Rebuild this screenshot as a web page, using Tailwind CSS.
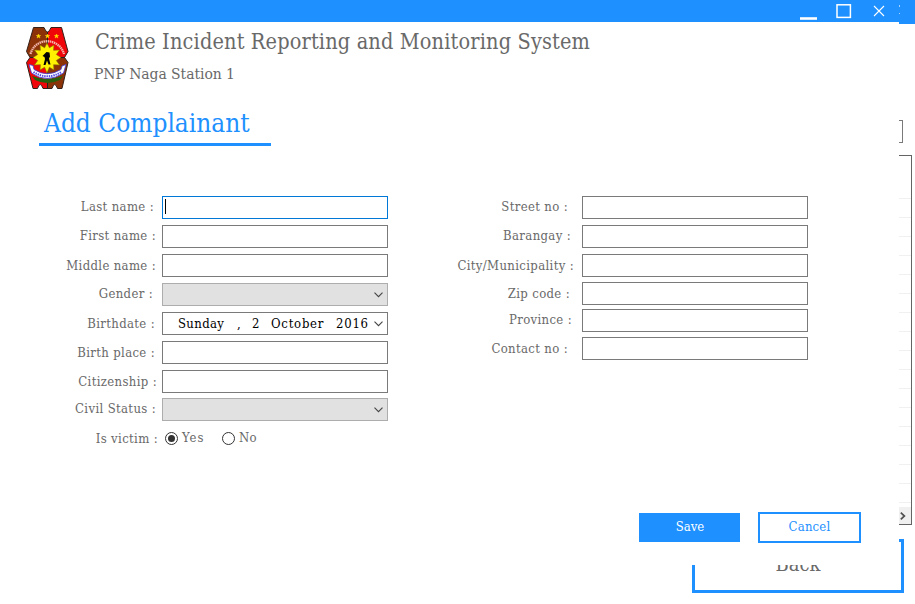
<!DOCTYPE html>
<html lang="en">
<head>
<meta charset="utf-8">
<title>Crime Incident Reporting and Monitoring System</title>
<script src="https://cdn.jsdelivr.net/npm/@tailwindcss/browser@4"></script>
</head>
<body class="relative h-[604px] w-[915px] overflow-hidden bg-white font-['DejaVu_Serif_Condensed','DejaVu_Serif',serif] text-[13px] text-[#696969]">

<!-- Main window, mostly hidden behind the dialog -->
<div class="flex h-[604px] flex-col items-end">
  <div class="flex h-6 w-full shrink-0 justify-end bg-[#1e90ff] pr-[15px] pt-[5px]">
    <div class="flex h-[9px] w-px flex-col justify-between"><i class="h-0.5 bg-white/60"></i><i class="h-px bg-white/60"></i></div>
  </div>
  <div class="mr-3 mt-24 h-[23px] w-40 shrink-0 border border-[#7a7a7a]"></div>
  <div class="mr-[3px] mt-3 flex h-[370px] w-[500px] shrink-0 flex-col border border-[#646464]">
    <div class="h-[42px] shrink-0"></div>
    <div class="h-[309px] shrink-0 bg-[repeating-linear-gradient(to_bottom,#f0f0f0_0,#f0f0f0_1px,#fff_1px,#fff_19px)]"></div>
    <div class="flex grow items-center justify-end bg-[#f0f0f0] pr-[5px]">
      <svg class="h-2 w-[6px]" viewBox="0 0 6 8" fill="none" stroke="#505050" stroke-width="1.7"><path d="M.8.7 4.4 4 .8 7.3"/></svg>
    </div>
  </div>
  <div class="mr-[11px] mt-3.5 h-[54px] w-[212px] shrink-0 border-[3px] border-[#1e90ff] pt-[10px] text-center text-[20px] leading-6">Back</div>
</div>

<!-- Dialog -->
<div class="absolute left-0 top-0 flex h-[565px] w-[899px] flex-col bg-white">
  <div class="flex h-[22px] shrink-0 justify-end bg-[#1e90ff] pr-3.5">
    <svg class="h-[22px] w-[88px]" viewBox="0 0 88 22" fill="none" stroke="#fff">
      <path d="M3 18.5h17" stroke-width="2.6"/>
      <rect x="40" y="4.8" width="13.4" height="12.6" stroke-width="1.5"/>
      <path d="m77 6 10 10M87 6 77 16" stroke-width="1.1"/>
    </svg>
  </div>
  <div class="flex h-[73px] shrink-0 pl-[26px] pt-[5px]">
    <svg class="h-[62px] w-[43px] shrink-0" viewBox="0 0 43 62">
      <defs>
        <clipPath id="shield"><path d="M7.500.5H18q3.500 9 7 0h10.500l6.500 24-3.500 6 3.500 5-6 26h-4.500q-2.800-8-5.500 0H17q-2.800-8-5.500 0H7L.5 35.500l3.500-5-3.500-6z"/></clipPath>
      </defs>
      <g clip-path="url(#shield)">
        <path d="M0 0h21v31H0zM21 31h22v31H21z" fill="#8b3208"/>
        <path d="M21 0h22v31H21zM0 31h21v31H0z" fill="#f00508"/>
        <path d="M21.500 0v62M0 30.500h43" stroke="#222" stroke-width="1"/>
      </g>
      <path d="M7.500.5H18q3.500 9 7 0h10.500l6.500 24-3.500 6 3.500 5-6 26h-4.500q-2.800-8-5.500 0H17q-2.800-8-5.500 0H7L.5 35.500l3.500-5-3.500-6z" fill="none" stroke="#332018" stroke-width="1"/>
      <path d="M6 49q15 6 31 0l-3 4q-13 6-25 0z" fill="#27600c"/>
      <path d="M4.500 27C9 10 33 10 38 27" fill="none" stroke="#f2b5a9" stroke-width="2.300" stroke-dasharray="1.500 .6"/>
      <path d="m21 16 2.400 4.800L28 18l-.4 5.300 6-.3-3.300 4.500 4.700 3-4.700 3 3.300 4.500-6-.3.400 5.300-4.600-2.800L21 46l-2.400-5.800L14 43l.4-5.300-6 .3 3.300-4.500-4.700-3 4.700-3L8.400 23l6 .3L14 18l4.600 2.800z" fill="#fff200" stroke="#8a6a00" stroke-width=".6"/>
      <path d="m20.500 25 3 .5.500 4-1 2 1.500 6h-2l-1.500-4-1.500 4.500h-2l1.500-6-.500-2-2-1z" fill="#000"/>
      <path d="M3 37.500 5.500 46Q21 57 37.500 46L40 37.500l-4 1.500-1 3.500Q21 51 8 42.500L7 38.500z" fill="#fff" stroke="#4038d8" stroke-width=".8"/>
      <path d="M7.500 45Q21 53.500 35.500 45" fill="none" stroke="#5048e0" stroke-width="2" stroke-dasharray="1.400 .9"/>
      <path d="m12.500 7 .6 1.500h1.500l-1.200 1 .5 1.500-1.400-.9-1.400.9.500-1.500-1.200-1h1.500zM30.500 7l.6 1.500h1.500l-1.200 1 .5 1.500-1.400-.9-1.400.9.500-1.500-1.200-1h1.500zM21.500 7l.6 1.500h1.500l-1.200 1 .5 1.500-1.400-.9-1.400.9.500-1.500-1.200-1h1.500z" fill="#ffe000" stroke="#ffe000" stroke-width=".5"/>
    </svg>
    <div class="ml-[25px] whitespace-nowrap">
      <h1 class="mt-px h-[30px] pl-px text-[21.500px] leading-[28px] tracking-[0.16px]">Crime Incident Reporting and Monitoring System</h1>
      <p class="mt-1.5 text-[15.500px] leading-5 tracking-[-0.05px]">PNP Naga Station 1</p>
    </div>
  </div>
  <h2 class="ml-[39px] mt-[9px] h-[42px] w-[232px] shrink-0 whitespace-nowrap border-b-3 border-[#1e90ff] pl-[5px] text-[26px] leading-[39px] text-[#1e90ff]">Add Complainant</h2>

  <div class="flex h-[317px] shrink-0 whitespace-nowrap pt-[50px] tracking-[0.35px]">
    <div class="flex w-[388px] flex-col gap-1.5">
      <div class="flex h-[23px] justify-between"><label class="w-[154px] text-right leading-[21px]">Last name :</label><div class="w-[226px] border border-[#0078d7] pl-0.5 pt-0.5"><i class="block h-[15px] w-px bg-black"></i></div></div>
      <div class="flex h-[23px] justify-between"><label class="w-[156px] text-right leading-[21px]">First name :</label><div class="w-[226px] border border-[#7a7a7a]"></div></div>
      <div class="flex h-[23px] justify-between"><label class="w-[156px] text-right leading-[23px]">Middle name :</label><div class="w-[226px] border border-[#7a7a7a]"></div></div>
      <div class="flex h-[23px] justify-between"><label class="w-[153px] text-right leading-[21px]">Gender :</label><div class="flex w-[226px] items-center justify-end border border-[#adadad] bg-[#e1e1e1] pr-1"><svg class="h-[6px] w-[9px]" viewBox="0 0 9 6" fill="none" stroke="#444" stroke-width="1.100"><path d="m.5.7 4 4 4-4"/></svg></div></div>
      <div class="flex h-[23px] justify-between"><label class="w-[155px] text-right leading-[23px]">Birthdate :</label><div class="flex w-[226px] items-center border border-[#7a7a7a] pl-[15px] pr-1 leading-[21px] text-black"><span class="w-[59px] shrink-0">Sunday</span><span class="w-[15px] shrink-0">,</span><span class="w-[19px] shrink-0">2</span><span class="w-[65px] shrink-0 tracking-[0.75px]">October</span><span class="w-[38px] shrink-0 tracking-[0.75px]">2016</span><svg class="h-[6px] w-[9px] shrink-0" viewBox="0 0 9 6" fill="none" stroke="#444" stroke-width="1.100"><path d="m.5.7 4 4 4-4"/></svg></div></div>
      <div class="flex h-[23px] justify-between"><label class="w-[155px] text-right leading-[23px]">Birth place :</label><div class="w-[226px] border border-[#7a7a7a]"></div></div>
      <div class="flex h-[23px] justify-between"><label class="w-[157px] text-right leading-[23px]">Citizenship :</label><div class="w-[226px] border border-[#7a7a7a]"></div></div>
      <div class="-mt-px flex h-[23px] justify-between"><label class="w-[156px] text-right leading-[21px]">Civil Status :</label><div class="flex w-[226px] items-center justify-end border border-[#adadad] bg-[#e1e1e1] pr-1"><svg class="h-[6px] w-[9px]" viewBox="0 0 9 6" fill="none" stroke="#444" stroke-width="1.100"><path d="m.5.7 4 4 4-4"/></svg></div></div>
      <div class="flex h-[23px] leading-[23px]"><label class="w-[158px] text-right">Is victim :</label>
        <svg class="ml-[7px] mt-1 h-[14px] w-[14px]" viewBox="0 0 14 14"><circle cx="6.500" cy="7.500" r="6" fill="#fff" stroke="#333"/><circle cx="6.500" cy="7.500" r="3.500" fill="#333"/></svg><span class="ml-[3px] w-[40px] leading-[21px] tracking-[1px]">Yes</span><svg class="mt-1 h-[14px] w-[14px]" viewBox="0 0 14 14"><circle cx="6.500" cy="7.500" r="6" fill="#fff" stroke="#333"/></svg><span class="ml-[3px] leading-[21px]">No</span>
      </div>
    </div>
    <div class="flex w-[420px] flex-col gap-1.5">
      <div class="flex h-[23px] justify-between"><label class="w-[180px] text-right leading-[21px]">Street no :</label><div class="w-[226px] border border-[#7a7a7a]"></div></div>
      <div class="flex h-[23px] justify-between"><label class="w-[183px] text-right leading-[21px]">Barangay :</label><div class="w-[226px] border border-[#7a7a7a]"></div></div>
      <div class="flex h-[23px] justify-between"><label class="w-[186px] text-right leading-[23px]">City/Municipality :</label><div class="w-[226px] border border-[#7a7a7a]"></div></div>
      <div class="-mt-px flex h-[23px] justify-between"><label class="w-[182px] text-right leading-[23px]">Zip code :</label><div class="w-[226px] border border-[#7a7a7a]"></div></div>
      <div class="-mt-0.5 flex h-[23px] justify-between"><label class="w-[184px] text-right leading-[21px]">Province :</label><div class="w-[226px] border border-[#7a7a7a]"></div></div>
      <div class="-mt-px flex h-[23px] justify-between"><label class="w-[180px] text-right leading-[23px]">Contact no :</label><div class="w-[226px] border border-[#7a7a7a]"></div></div>
    </div>
  </div>

  <div class="mt-[49px] flex items-start justify-end gap-[18px] pr-[38px]">
    <button class="mt-px h-[29px] w-[101px] bg-[#1e90ff] pb-[2px] pl-px text-white">Save</button>
    <button class="h-[31px] w-[103px] border-2 border-[#1e90ff] pb-[2px] tracking-[0.2px] text-[#1e90ff]">Cancel</button>
  </div>
</div>
</body>
</html>
